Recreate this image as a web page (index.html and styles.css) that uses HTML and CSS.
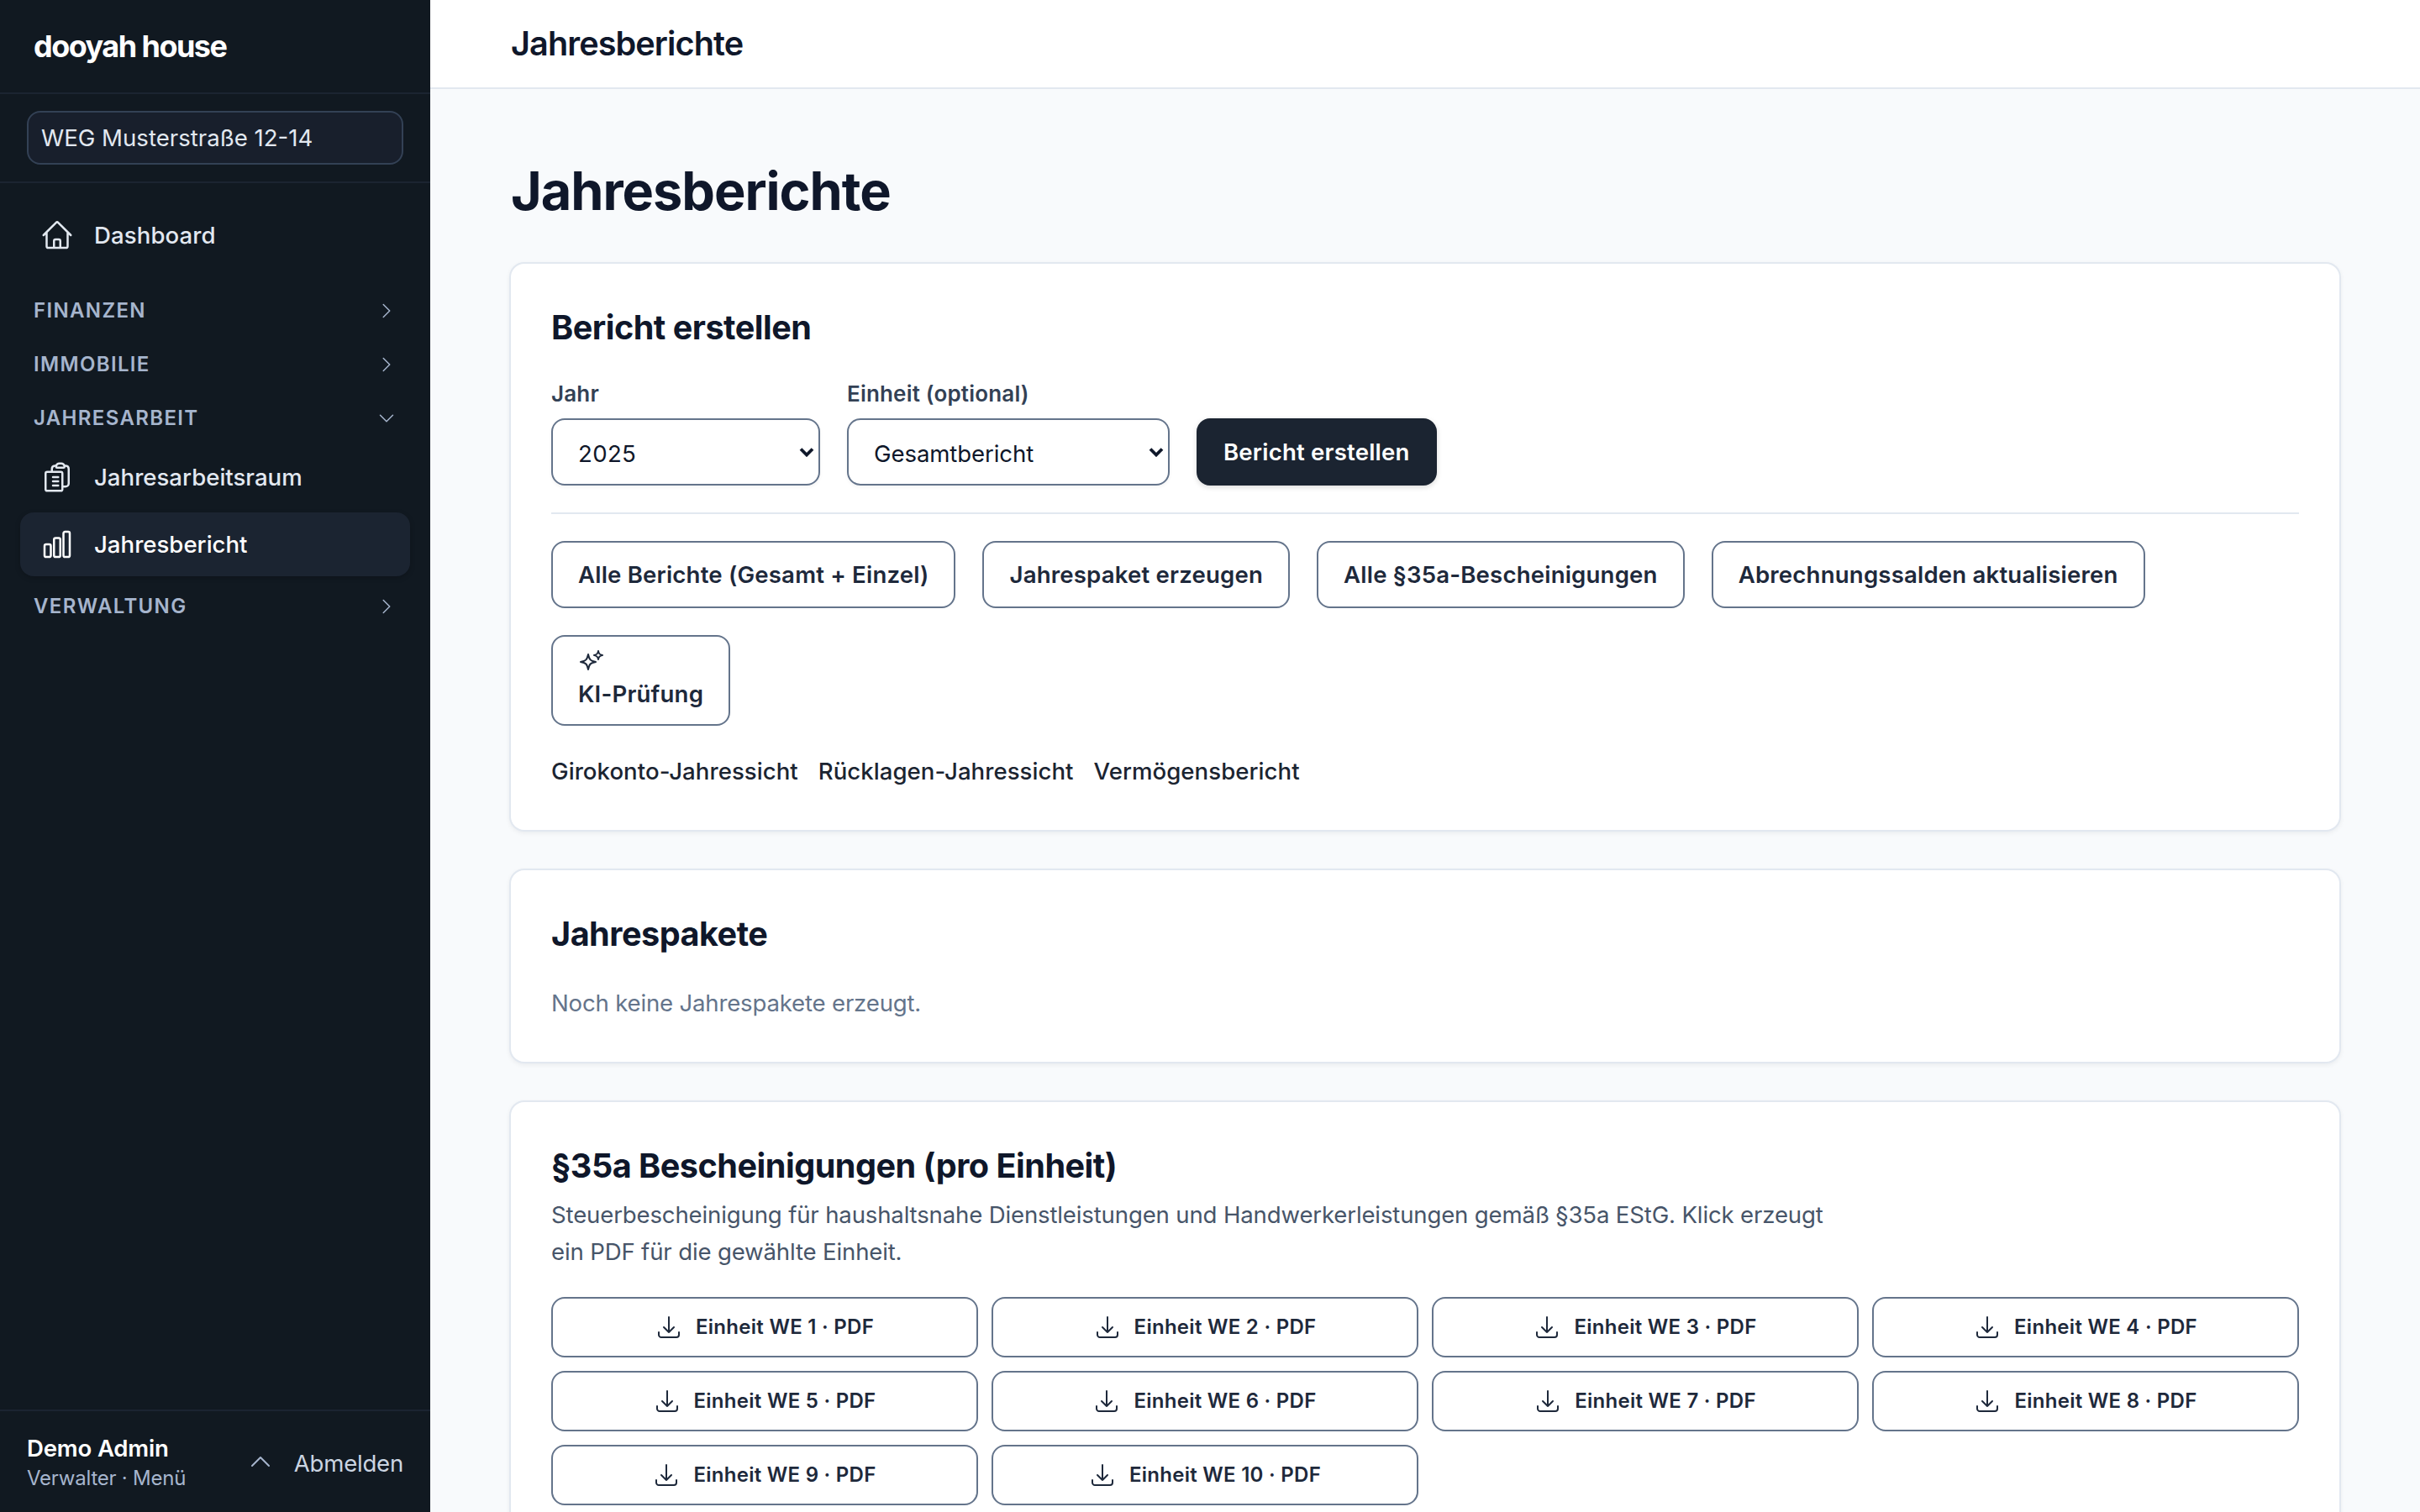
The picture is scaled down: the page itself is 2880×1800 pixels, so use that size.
FILE: index.html
```html
<!DOCTYPE html>
<html lang="de">
<head>
    <meta charset="UTF-8">
    <meta name="viewport" content="width=device-width, initial-scale=1.0">
    <title>Jahresberichte</title>
    <link rel="stylesheet" href="styles.css">
</head>
<body>
    <svg class="sprite" aria-hidden="true">
        <symbol id="home" viewBox="0 0 24 24"><path d="m2.25 12 8.954-8.955c.44-.439 1.152-.439 1.591 0L21.75 12M4.5 9.75v10.125c0 .621.504 1.125 1.125 1.125H9.75v-4.875c0-.621.504-1.125 1.125-1.125h2.25c.621 0 1.125.504 1.125 1.125V21h4.125c.621 0 1.125-.504 1.125-1.125V9.75M8.25 21h8.25"/></symbol>
        <symbol id="clipboard" viewBox="0 0 24 24"><path d="M9 12h3.75M9 15h3.75M9 18h3.75m3 .75H18a2.25 2.25 0 0 0 2.25-2.25V6.108c0-1.135-.845-2.098-1.976-2.192a48.424 48.424 0 0 0-1.123-.08m-5.801 0c-.065.21-.1.433-.1.664 0 .414.336.75.75.75h4.5a.75.75 0 0 0 .75-.75 2.25 2.25 0 0 0-.1-.664m-5.8 0A2.251 2.251 0 0 1 13.5 2.25H15c1.012 0 1.867.668 2.15 1.586m-5.8 0c-.376.023-.75.05-1.124.08C9.095 4.01 8.25 4.973 8.25 6.108V8.25m0 0H4.875c-.621 0-1.125.504-1.125 1.125v11.25c0 .621.504 1.125 1.125 1.125h9.75c.621 0 1.125-.504 1.125-1.125V9.375c0-.621-.504-1.125-1.125-1.125H8.25Z"/></symbol>
        <symbol id="chart" viewBox="0 0 24 24"><path d="M3 13.125C3 12.504 3.504 12 4.125 12h2.25c.621 0 1.125.504 1.125 1.125v6.75C7.5 20.496 6.996 21 6.375 21h-2.25A1.125 1.125 0 0 1 3 19.875v-6.75ZM9.75 8.625c0-.621.504-1.125 1.125-1.125h2.25c.621 0 1.125.504 1.125 1.125v11.25c0 .621-.504 1.125-1.125 1.125h-2.25a1.125 1.125 0 0 1-1.125-1.125V8.625ZM16.5 4.125c0-.621.504-1.125 1.125-1.125h2.25C20.496 3 21 3.504 21 4.125v15.75c0 .621-.504 1.125-1.125 1.125h-2.25a1.125 1.125 0 0 1-1.125-1.125V4.125Z"/></symbol>
        <symbol id="right" viewBox="0 0 24 24"><path d="m8.25 4.5 7.5 7.5-7.5 7.5"/></symbol>
        <symbol id="down" viewBox="0 0 24 24"><path d="m19.5 8.25-7.5 7.5-7.5-7.5"/></symbol>
        <symbol id="up" viewBox="0 0 24 24"><path d="m4.5 15.75 7.5-7.5 7.5 7.5"/></symbol>
        <symbol id="download" viewBox="0 0 24 24"><path d="M3 16.5v2.25A2.25 2.25 0 0 0 5.25 21h13.5A2.25 2.25 0 0 0 21 18.75V16.5M16.5 12 12 16.5m0 0L7.5 12m4.5 4.5V3"/></symbol>
        <symbol id="sparkles" viewBox="0 0 24 24"><path d="M9.813 15.904 9 18.75l-.813-2.846a4.5 4.5 0 0 0-3.09-3.09L2.25 12l2.846-.813a4.5 4.5 0 0 0 3.09-3.09L9 5.25l.813 2.846a4.5 4.5 0 0 0 3.09 3.09L15.75 12l-2.846.813a4.5 4.5 0 0 0-3.09 3.09ZM18.259 8.715 18 9.75l-.259-1.035a3.375 3.375 0 0 0-2.455-2.456L14.25 6l1.036-.259a3.375 3.375 0 0 0 2.455-2.456L18 2.25l.259 1.035a3.375 3.375 0 0 0 2.456 2.456L21.75 6l-1.035.259a3.375 3.375 0 0 0-2.456 2.456Z"/></symbol>
    </svg>

    <div class="layout">
        <aside class="sidebar">
            <div class="logo">dooyah house</div>
            <div class="property">
                <div class="property-select">WEG Musterstraße 12-14</div>
            </div>
            <nav class="nav">
                <a class="nav-item nav-first"><svg class="icon-nav"><use href="#home"/></svg>Dashboard</a>
                <div class="nav-group">FINANZEN<svg class="icon-small"><use href="#right"/></svg></div>
                <div class="nav-group">IMMOBILIE<svg class="icon-small"><use href="#right"/></svg></div>
                <div class="nav-group">JAHRESARBEIT<svg class="icon-small"><use href="#down"/></svg></div>
                <a class="nav-item"><svg class="icon-nav"><use href="#clipboard"/></svg>Jahresarbeitsraum</a>
                <a class="nav-item active"><svg class="icon-nav"><use href="#chart"/></svg>Jahresbericht</a>
                <div class="nav-group">VERWALTUNG<svg class="icon-small"><use href="#right"/></svg></div>
            </nav>
            <div class="user">
                <div class="user-info">
                    <div class="user-name">Demo Admin</div>
                    <div class="user-role">Verwalter · Menü</div>
                </div>
                <svg class="icon user-chevron"><use href="#up"/></svg>
                <a class="logout">Abmelden</a>
            </div>
        </aside>

        <main class="main">
            <header class="topbar">Jahresberichte</header>
            <div class="content">
                <h1>Jahresberichte</h1>

                <section class="card">
                    <h2>Bericht erstellen</h2>
                    <div class="form">
                        <div class="field field-year">
                            <label>Jahr</label>
                            <div class="select year">2025<svg class="caret" viewBox="0 0 18 12"><path d="m2 2.5 7 7 7-7"/></svg></div>
                        </div>
                        <div class="field field-unit">
                            <label>Einheit (optional)</label>
                            <div class="select">Gesamtbericht<svg class="caret" viewBox="0 0 18 12"><path d="m2 2.5 7 7 7-7"/></svg></div>
                        </div>
                        <button class="btn btn-primary">Bericht erstellen</button>
                    </div>
                    <div class="actions">
                        <button class="btn">Alle Berichte (Gesamt + Einzel)</button>
                        <button class="btn">Jahrespaket erzeugen</button>
                        <button class="btn">Alle §35a-Bescheinigungen</button>
                        <button class="btn">Abrechnungssalden aktualisieren</button>
                        <button class="btn btn-ai"><svg class="icon"><use href="#sparkles"/></svg>KI-Prüfung</button>
                    </div>
                    <div class="links">
                        <a>Girokonto-Jahressicht</a>
                        <a>Rücklagen-Jahressicht</a>
                        <a>Vermögensbericht</a>
                    </div>
                </section>

                <section class="card">
                    <h2>Jahrespakete</h2>
                    <p class="empty">Noch keine Jahrespakete erzeugt.</p>
                </section>

                <section class="card">
                    <h2>§35a Bescheinigungen (pro Einheit)</h2>
                    <p class="hint">Steuerbescheinigung für haushaltsnahe Dienstleistungen und Handwerkerleistungen gemäß §35a EStG. Klick erzeugt ein PDF für die gewählte Einheit.</p>
                    <div class="units">
                        <button class="btn-unit"><svg class="icon"><use href="#download"/></svg>Einheit WE 1 · PDF</button>
                        <button class="btn-unit"><svg class="icon"><use href="#download"/></svg>Einheit WE 2 · PDF</button>
                        <button class="btn-unit"><svg class="icon"><use href="#download"/></svg>Einheit WE 3 · PDF</button>
                        <button class="btn-unit"><svg class="icon"><use href="#download"/></svg>Einheit WE 4 · PDF</button>
                        <button class="btn-unit"><svg class="icon"><use href="#download"/></svg>Einheit WE 5 · PDF</button>
                        <button class="btn-unit"><svg class="icon"><use href="#download"/></svg>Einheit WE 6 · PDF</button>
                        <button class="btn-unit"><svg class="icon"><use href="#download"/></svg>Einheit WE 7 · PDF</button>
                        <button class="btn-unit"><svg class="icon"><use href="#download"/></svg>Einheit WE 8 · PDF</button>
                        <button class="btn-unit"><svg class="icon"><use href="#download"/></svg>Einheit WE 9 · PDF</button>
                        <button class="btn-unit"><svg class="icon"><use href="#download"/></svg>Einheit WE 10 · PDF</button>
                    </div>
                </section>
            </div>
        </main>
    </div>
</body>
</html>
```
FILE: styles.css
```css
* {
    box-sizing: border-box;
}
body {
    margin: 0;
    font-family: Inter, "Liberation Sans", sans-serif;
    font-size: 27.6px;
    line-height: 44px;
    color: #0f172a;
    background: #f8fafc;
}
h1, h2, p {
    margin: 0;
}
button {
    font-family: inherit;
    cursor: pointer;
}
.sprite {
    display: none;
}
svg {
    flex: none;
    fill: none;
    stroke: currentColor;
    stroke-width: 1.5;
    stroke-linecap: round;
    stroke-linejoin: round;
}
.icon {
    width: 32px;
    height: 32px;
}
.icon-nav {
    width: 40px;
    height: 40px;
}
.icon-small {
    width: 24px;
    height: 24px;
}
.layout {
    display: flex;
    height: 1800px;
    overflow: hidden;
}

/* Sidebar */
.sidebar {
    display: flex;
    flex-direction: column;
    flex: none;
    width: 512px;
    background: #111921;
    color: #e2e8f0;
}
.logo {
    height: 112px;
    padding: 33px 40px 0;
    border-bottom: 2px solid #1b2431;
    font-size: 36px;
    font-weight: 700;
    letter-spacing: -0.043em;
    color: #fff;
}
.property {
    padding: 20px 32px;
    border-bottom: 2px solid #1b2431;
}
.property-select {
    height: 64px;
    padding: 0 16px 0 15px;
    border: 2px solid #334155;
    border-radius: 16px;
    background: #181f2c;
    line-height: 61px;
}
.nav {
    flex: 1;
    padding: 24px;
}
.nav-item {
    display: flex;
    align-items: center;
    gap: 24px;
    height: 76px;
    margin-bottom: 4px;
    padding: 0 24px;
    border-radius: 16px;
    font-weight: 500;
}
.nav-first {
    margin-bottom: 20px;
    letter-spacing: 0.003em;
}
.nav-item.active {
    background: #1b2431;
    color: #fff;
    box-shadow: 0 2px 6px rgba(0, 0, 0, 0.2);
}
.nav-group {
    display: flex;
    align-items: center;
    justify-content: space-between;
    height: 64px;
    padding: 0 16px;
    font-size: 24px;
    font-weight: 600;
    letter-spacing: 0.056em;
    color: #a6b5cd;
}
.user {
    display: flex;
    align-items: center;
    height: 122px;
    padding: 0 32px;
    border-top: 2px solid #1b2431;
}
.user-info {
    flex: 1;
}
.user-name {
    font-weight: 600;
    line-height: 40px;
    letter-spacing: -0.007em;
    color: #fff;
}
.user-role {
    font-size: 24px;
    line-height: 32px;
    letter-spacing: -0.01em;
    color: #a6b5cd;
}
.user-chevron {
    margin-right: 24px;
    color: #a6b5cd;
}
.logout {
    padding-top: 4px;
    letter-spacing: -0.009em;
    color: #cbd5e1;
}

/* Content */
.main {
    flex: 1;
    min-width: 0;
}
.topbar {
    height: 106px;
    padding: 0 96px;
    border-bottom: 2px solid #e2e8f0;
    background: #fff;
    font-size: 39.6px;
    font-weight: 600;
    line-height: 104px;
    letter-spacing: -0.0225em;
}
.content {
    padding: 80px 96px;
}
h1 {
    height: 80px;
    margin-bottom: 48px;
    font-size: 63px;
    font-weight: 700;
    line-height: 82px;
    letter-spacing: -0.0165em;
}
h2 {
    font-size: 39.6px;
    font-weight: 700;
    line-height: 56px;
    letter-spacing: -0.0125em;
}
.card {
    margin-bottom: 48px;
    padding: 48px;
    border-radius: 16px;
    background: #fff;
    box-shadow: 0 0 0 2px #e2e8f0, 0 2px 6px 1px rgba(15, 23, 42, 0.08);
}
.form {
    display: flex;
    align-items: flex-end;
    gap: 32px;
    margin-top: 32px;
    padding-bottom: 32px;
    border-bottom: 2px solid #e2e8f0;
}
.field-year {
    width: 320px;
}
.field-unit {
    width: 384px;
}
.field label {
    display: block;
    margin-bottom: 10px;
    font-size: 26px;
    font-weight: 600;
    line-height: 38px;
    letter-spacing: 0.007em;
    color: #334155;
}
.select {
    display: flex;
    align-items: center;
    justify-content: space-between;
    height: 80px;
    padding: 4px 5px 0 30px;
    border: 2px solid #64748b;
    border-radius: 16px;
    letter-spacing: -0.004em;
    box-shadow: 0 2px 4px rgba(0, 0, 0, 0.05);
}
.select.year {
    letter-spacing: 0.012em;
}
.caret {
    width: 18px;
    height: 12px;
    margin-top: -4px;
    stroke-width: 3.8;
    stroke-linecap: butt;
    stroke-linejoin: miter;
}
.btn {
    min-height: 80px;
    padding: 14px 30px;
    border: 2px solid #64748b;
    border-radius: 16px;
    background: #fff;
    color: #1e293b;
    font-size: 27.6px;
    font-weight: 600;
    line-height: 44px;
    letter-spacing: 0.0065em;
}
.btn-primary {
    border-color: #1b2431;
    background: #1b2431;
    color: #fff;
    box-shadow: 0 2px 6px rgba(0, 0, 0, 0.15);
}
.btn-ai {
    text-align: left;
}
.btn-ai .icon {
    display: block;
}
.actions {
    display: flex;
    flex-wrap: wrap;
    gap: 32px;
    margin-top: 32px;
}
.links {
    display: flex;
    gap: 24px;
    margin-top: 32px;
    font-weight: 500;
    letter-spacing: 0.0015em;
    color: #1b2431;
}
.empty {
    margin-top: 32px;
    letter-spacing: -0.007em;
    color: #64748b;
}
.hint {
    max-width: 1536px;
    margin-top: 8px;
    letter-spacing: -0.0059em;
    color: #475569;
}
.units {
    display: grid;
    grid-template-columns: repeat(4, 1fr);
    gap: 16px;
    margin-top: 32px;
}
.btn-unit {
    display: flex;
    align-items: center;
    justify-content: center;
    gap: 16px;
    height: 72px;
    padding: 0 6px 1px;
    border: 2px solid #64748b;
    border-radius: 16px;
    background: #fff;
    color: #1e293b;
    font-size: 24px;
    font-weight: 600;
    letter-spacing: 0.0115em;
}
```
